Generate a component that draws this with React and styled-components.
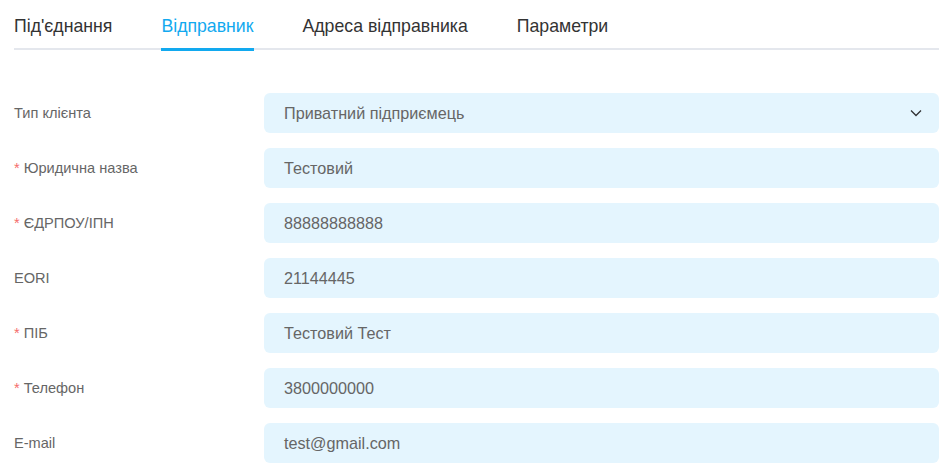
import React from 'react';
import styled, { createGlobalStyle } from 'styled-components';

const GlobalStyle = createGlobalStyle`
  body {
    margin: 0;
    background: #fff;
    font-family: "Liberation Sans", Arial, sans-serif;
  }
`;

const tabs = ["Під'єднання", 'Відправник', 'Адреса відправника', 'Параметри'];

const fields = [
  { label: 'Тип клієнта', value: 'Приватний підприємець', select: true },
  { label: 'Юридична назва', value: 'Тестовий', required: true },
  { label: 'ЄДРПОУ/ІПН', value: '88888888888', required: true },
  { label: 'EORI', value: '21144445' },
  { label: 'ПІБ', value: 'Тестовий Тест', required: true },
  { label: 'Телефон', value: '3800000000', required: true },
  { label: 'E-mail', value: 'test@gmail.com' },
];

const Chevron = () => (
  <svg width="12" height="8" viewBox="0 0 12 8" fill="none">
    <path d="M1 1.5L6 6.5L11 1.5" stroke="#303133" strokeWidth="1.3" />
  </svg>
);

const App = () => (
  <Page>
    <GlobalStyle />
    <TabBar>
      {tabs.map((t, i) => (
        <Tab key={t} $active={i === 1}>{t}</Tab>
      ))}
    </TabBar>

    <Form>
      {fields.map(f => (
        <Row key={f.label}>
          <Label>
            {f.required && <Star>*</Star>}
            {f.label}
          </Label>
          <Field>
            <span>{f.value}</span>
            {f.select && <Chevron />}
          </Field>
        </Row>
      ))}
    </Form>
  </Page>
);

export default App;

const Page = styled.div`
  padding: 0 12px 0 14px;
`;

const TabBar = styled.div`
  display: flex;
  gap: 49px;
  border-bottom: 2px solid #e4e7ed;
`;

const Tab = styled.div`
  position: relative;
  padding: 14px 0 10px;
  font-size: 17.7px;
  line-height: 24px;
  color: ${p => (p.$active ? '#12a9ef' : '#333')};

  &::after {
    content: '';
    display: ${p => (p.$active ? 'block' : 'none')};
    position: absolute;
    left: 0;
    right: 0;
    bottom: -3px;
    height: 3px;
    background: #12a9ef;
  }
`;

const Form = styled.div`
  display: flex;
  flex-direction: column;
  gap: 15px;
  margin-top: 43px;
`;

const Row = styled.div`
  display: grid;
  grid-template-columns: 250px 1fr;
  align-items: center;
`;

const Label = styled.div`
  font-size: 14.6px;
  color: #666;
`;

const Star = styled.span`
  color: #f56c6c;
  margin-right: 4px;
`;

const Field = styled.div`
  height: 40px;
  display: flex;
  align-items: center;
  justify-content: space-between;
  padding: 0 17px 0 20px;
  background: #e4f5fe;
  border-radius: 6px;
  font-size: 16.2px;
  color: #666;
`;
